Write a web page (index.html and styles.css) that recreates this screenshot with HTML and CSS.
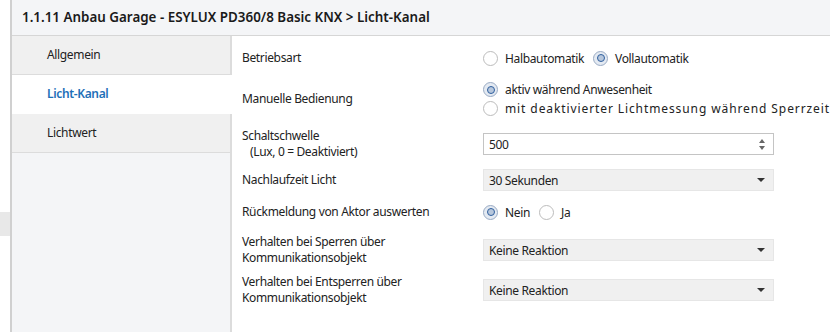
FILE: index.html
```html
<!DOCTYPE html>
<html lang="de">
<head>
    <meta charset="UTF-8">
    <title>Licht-Kanal</title>
    <link rel="stylesheet" href="styles.css">
</head>
<body>
    <div class="gutter">
        <div class="gutter-tab"></div>
    </div>

    <div class="main">
        <div class="header">1.1.11 Anbau Garage - ESYLUX PD360/8 Basic KNX &gt; Licht-Kanal</div>

        <div class="panes">
            <div class="sidebar">
                <div class="nav-item">Allgemein</div>
                <div class="nav-item active">Licht-Kanal</div>
                <div class="nav-item">Lichtwert</div>
                <div class="nav-fill"></div>
            </div>

            <div class="content">
                <div class="row r1">
                    <div class="label">Betriebsart</div>
                    <div class="ctrl radios">
                        <span class="radio"></span><span class="opt">Halbautomatik</span>
                        <span class="radio on"></span><span class="opt">Vollautomatik</span>
                    </div>
                </div>

                <div class="row r2">
                    <div class="label">Manuelle Bedienung</div>
                    <div class="ctrl stack">
                        <div class="radios"><span class="radio on"></span><span class="opt">aktiv während Anwesenheit</span></div>
                        <div class="radios"><span class="radio"></span><span class="opt wide">mit deaktivierter Lichtmessung während Sperrzeit</span></div>
                    </div>
                </div>

                <div class="row r3">
                    <div class="label">Schaltschwelle<br><span class="sub">(Lux, 0 = Deaktiviert)</span></div>
                    <div class="ctrl">
                        <div class="spin">
                            <span>500</span>
                            <span class="spin-btns"><span class="up"></span><span class="down"></span></span>
                        </div>
                    </div>
                </div>

                <div class="row r4">
                    <div class="label">Nachlaufzeit Licht</div>
                    <div class="ctrl"><div class="select">30 Sekunden<span class="caret"></span></div></div>
                </div>

                <div class="row r5">
                    <div class="label">Rückmeldung von Aktor auswerten</div>
                    <div class="ctrl radios">
                        <span class="radio on"></span><span class="opt">Nein</span>
                        <span class="radio"></span><span class="opt">Ja</span>
                    </div>
                </div>

                <div class="row r6">
                    <div class="label">Verhalten bei Sperren über<br>Kommunikationsobjekt</div>
                    <div class="ctrl"><div class="select">Keine Reaktion<span class="caret"></span></div></div>
                </div>

                <div class="row r7">
                    <div class="label">Verhalten bei Entsperren über<br>Kommunikationsobjekt</div>
                    <div class="ctrl"><div class="select">Keine Reaktion<span class="caret"></span></div></div>
                </div>
            </div>
        </div>
    </div>
</body>
</html>
```

FILE: styles.css
```css
html, body {
    height: 100%;
}

body {
    margin: 0;
    display: flex;
    overflow: hidden;
    background: #fff;
    font-family: "Noto Sans", "Open Sans", sans-serif;
    font-size: 12px;
    letter-spacing: -0.35px;
    color: #222;
}

.gutter {
    width: 10px;
    flex: none;
    padding-top: 212px;
}

.gutter-tab {
    height: 24px;
    background: #e8e8e8;
}

.main {
    flex: 1;
    display: flex;
    flex-direction: column;
    border-left: 2px solid #d0d0d0;
    min-width: 0;
}

.header {
    height: 35px;
    line-height: 35px;
    padding-left: 10px;
    background: #f4f5f7;
    border-bottom: 1px solid #d6d6d6;
    font-size: 13.4px;
    font-weight: 600;
    letter-spacing: 0;
    color: #1a1a1a;
    white-space: nowrap;
}

.panes {
    flex: 1;
    display: flex;
}

.sidebar {
    width: 220px;
    flex: none;
    display: flex;
    flex-direction: column;
    background: #f4f5f7;
}

.nav-item {
    height: 38px;
    line-height: 38px;
    padding-left: 35px;
    background: #f0f0f0;
    border-bottom: 1px solid #dcdcdc;
    border-right: 2px solid #dcdcdc;
    color: #222;
}

.nav-item.active {
    background: #fff;
    border-right-color: #fff;
    border-bottom-color: #fff;
    color: #1d6fb8;
    font-weight: 600;
}

.nav-fill {
    flex: 1;
    border-right: 2px solid #dcdcdc;
}

.content {
    flex: 1;
    padding: 2px 0 0 10px;
    min-width: 0;
}

.row {
    display: flex;
    align-items: center;
}

.r1 { height: 40px; }
.r2 { height: 42px; }
.r3 { height: 48px; }
.r4 { height: 24px; }
.r5 { height: 40px; }
.r6 { height: 36px; }
.r7 { height: 44px; }

.label {
    width: 241px;
    flex: none;
    line-height: 16px;
}

.sub {
    padding-left: 8px;
}

.ctrl {
    width: 291px;
    flex: none;
    white-space: nowrap;
}

.radios {
    display: flex;
    align-items: center;
    height: 19px;
}

.radio {
    width: 13px;
    height: 13px;
    border: 1px solid #bcbcbc;
    border-radius: 50%;
    background: #fff;
    display: flex;
    align-items: center;
    justify-content: center;
    flex: none;
}

.radio.on {
    border-color: #9aabc4;
    background: #e4eaf2;
}

.radio.on::after {
    content: "";
    width: 6px;
    height: 6px;
    border-radius: 50%;
    border: 1.5px solid #2f5f9e;
    background: #b7c7dc;
}

.opt {
    margin: 0 9px 0 7px;
}

/* this option is set wider in the original dialog */
.wide {
    letter-spacing: 0.9px;
}

.spin {
    height: 20px;
    border: 1px solid #c4c4c4;
    display: flex;
    align-items: center;
    justify-content: space-between;
    padding: 0 8px 0 5px;
}

.spin-btns {
    display: flex;
    flex-direction: column;
    gap: 3px;
}

.up, .down {
    width: 0;
    height: 0;
    border-left: 3px solid transparent;
    border-right: 3px solid transparent;
}

.up {
    border-bottom: 4px solid #666;
}

.down {
    border-top: 4px solid #666;
}

.select {
    height: 20px;
    border: 1px solid #e6e6e6;
    background: #f0f0f0;
    display: flex;
    align-items: center;
    justify-content: space-between;
    padding: 0 8px 0 5px;
}

.caret {
    width: 0;
    height: 0;
    border-left: 4px solid transparent;
    border-right: 4px solid transparent;
    border-top: 4px solid #333;
}
```
